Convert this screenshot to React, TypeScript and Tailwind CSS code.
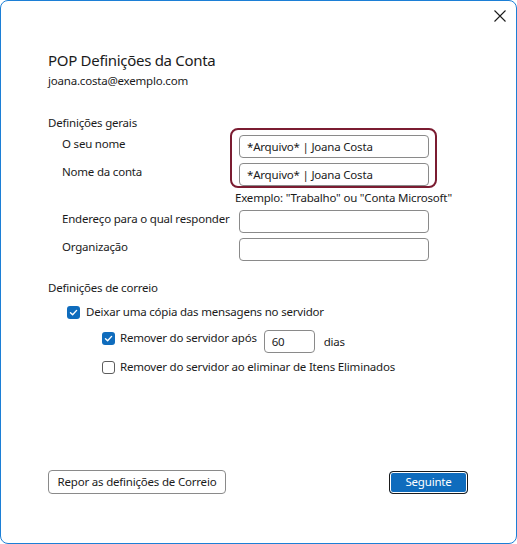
function Check({ checked }: { checked: boolean }) {
  return checked ? (
    <span className="flex h-[13px] w-[13px] shrink-0 items-center justify-center rounded-[3px] bg-[#0f6cbd]">
      <svg width="9" height="9" viewBox="0 0 9 9" fill="none">
        <path d="M1.5 4.8 L3.6 6.8 L7.6 2.4" stroke="white" strokeWidth="1.4" strokeLinecap="round" strokeLinejoin="round" />
      </svg>
    </span>
  ) : (
    <span className="h-[13px] w-[13px] shrink-0 rounded-[3px] border border-[#5d5d5d] bg-white" />
  );
}

function Field({ value = "" }: { value?: string }) {
  return (
    <div className="flex h-[23px] w-[190px] items-center rounded-[4px] border border-[#8a8a8a] bg-white px-[7px] text-[#1a1a1a]">
      {value}
    </div>
  );
}

export default function App() {
  return (
    <div
      className="flex h-[544px] w-[517px] flex-col rounded-[8px] border border-[#1c7fd6] bg-white text-[11.5px] tracking-[-0.2px] text-[#1b1b1b]"
      style={{ fontFamily: '"Noto Sans", "Liberation Sans", sans-serif' }}
    >
      <div className="flex justify-end pr-[10px] pt-[9px]">
        <svg width="12" height="12" viewBox="0 0 12 12" fill="none">
          <path d="M0.5 0.5 L11.5 11.5 M11.5 0.5 L0.5 11.5" stroke="#1b1b1b" strokeWidth="1.1" />
        </svg>
      </div>

      <div className="flex flex-1 flex-col px-[47px] pt-[28px]">
        <h1 className="text-[15px] leading-[20px] tracking-[-0.3px] text-[#1b1b1b]">POP Definições da Conta</h1>
        <div className="mt-[3px] leading-[16px]">joana.costa@exemplo.com</div>

        <div className="mt-[26px] leading-[16px]">Definições gerais</div>

        <div className="relative mt-[4px] ml-[14px] grid grid-cols-[177px_190px] items-center gap-y-[5px]">
          <div className="-mt-[5px]">O seu nome</div>
          <Field value="*Arquivo* | Joana Costa" />
          <div className="-mt-[5px]">Nome da conta</div>
          <Field value="*Arquivo* | Joana Costa" />
          <div />
          <div className="-ml-[4px] h-[14px] whitespace-nowrap leading-[14px]">Exemplo: "Trabalho" ou "Conta Microsoft"</div>
          <div className="-mt-[5px] whitespace-nowrap">Endereço para o qual responder</div>
          <Field />
          <div className="-mt-[5px]">Organização</div>
          <Field />
          <div className="pointer-events-none absolute left-[168px] top-[-7px] h-[60px] w-[207px] rounded-[8px] border-2 border-[#7b1c31]" />
        </div>

        <div className="mt-[19px] leading-[16px]">Definições de correio</div>
        <div className="mt-[8px] ml-[19px] flex h-[16px] items-center gap-[6px]">
          <Check checked />
          <span>Deixar uma cópia das mensagens no servidor</span>
        </div>
        <div className="mt-[10px] ml-[54px] flex h-[23px] items-start">
          <span className="mt-[2px]">
            <Check checked />
          </span>
          <span className="ml-[5px] leading-[16px]">Remover do servidor após</span>
          <div className="ml-[7px] flex h-[23px] w-[51px] items-center rounded-[4px] border border-[#8a8a8a] px-[7px]">60</div>
          <span className="ml-[9px] mt-[4px] leading-[16px]">dias</span>
        </div>
        <div className="mt-[6px] ml-[54px] flex h-[16px] items-center">
          <Check checked={false} />
          <span className="ml-[5px]">Remover do servidor ao eliminar de Itens Eliminados</span>
        </div>

        <div className="mt-auto mb-[49px] flex items-center justify-between pr-[1px]">
          <button className="h-[24px] w-[178px] rounded-[4px] border border-[#8a8a8a] bg-white text-[#1b1b1b]">
            Repor as definições de Correio
          </button>
          <button className="h-[23px] w-[79px] rounded-[4px] border border-[#1b1b1b] bg-[#0f6cbd] text-white shadow-[inset_0_0_0_1px_#ffffff]">
            Seguinte
          </button>
        </div>
      </div>
    </div>
  );
}
